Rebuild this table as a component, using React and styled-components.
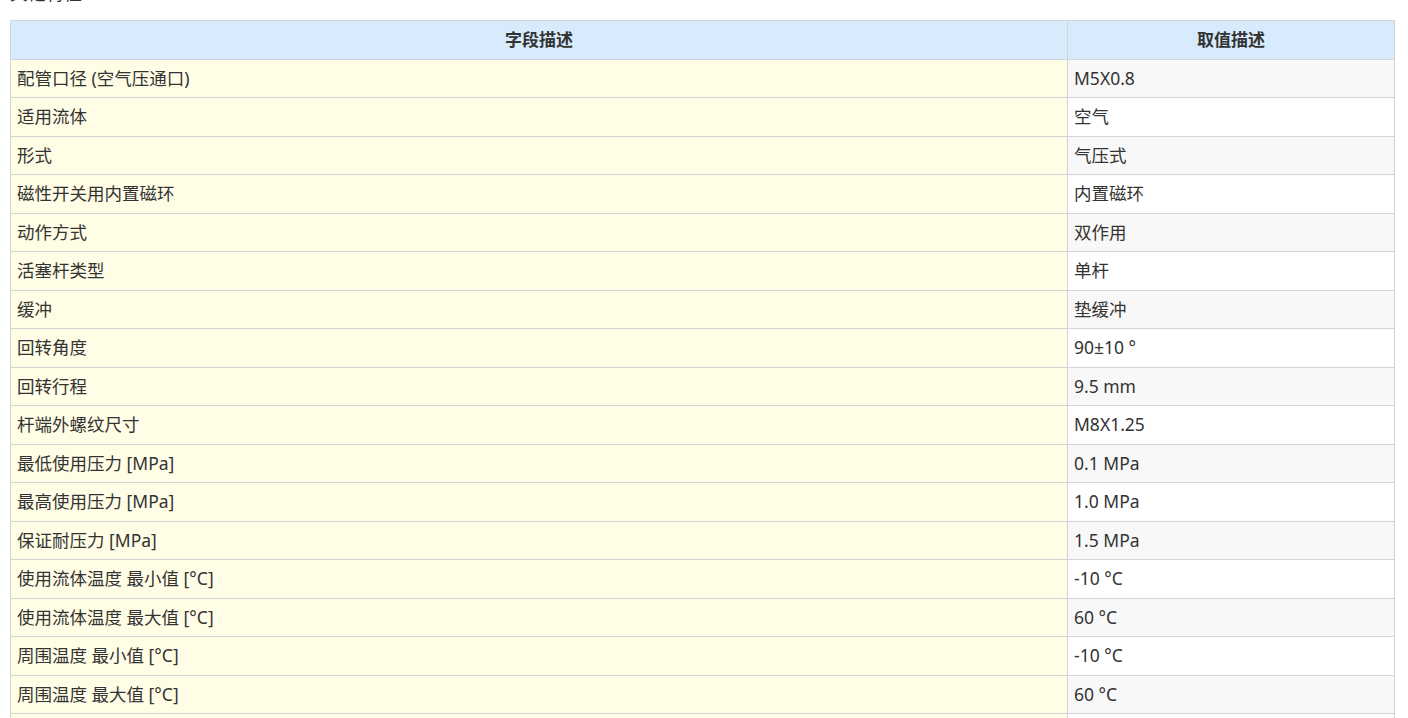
import styled, { createGlobalStyle } from "styled-components";

const GlobalStyle = createGlobalStyle`
  html, body {
    margin: 0;
    padding: 0;
    background: #fff;
  }
  body {
    font-family: "Noto Sans", "Noto Sans CJK SC", sans-serif;
    color: #333;
    overflow: hidden;
  }
`;

const specs = [
  ["配管口径 (空气压通口)", "M5X0.8"],
  ["适用流体", "空气"],
  ["形式", "气压式"],
  ["磁性开关用内置磁环", "内置磁环"],
  ["动作方式", "双作用"],
  ["活塞杆类型", "单杆"],
  ["缓冲", "垫缓冲"],
  ["回转角度", "90±10 °"],
  ["回转行程", "9.5 mm"],
  ["杆端外螺纹尺寸", "M8X1.25"],
  ["最低使用压力 [MPa]", "0.1 MPa"],
  ["最高使用压力 [MPa]", "1.0 MPa"],
  ["保证耐压力 [MPa]", "1.5 MPa"],
  ["使用流体温度 最小值 [°C]", "-10 °C"],
  ["使用流体温度 最大值 [°C]", "60 °C"],
  ["周围温度 最小值 [°C]", "-10 °C"],
  ["周围温度 最大值 [°C]", "60 °C"],
  ["重量 [g]", "—"],
];

const Section = styled.section`
  padding: 0 13px 0 10px;
`;

const Title = styled.h3`
  margin: -19px 0 15px;
  font-size: 18px;
  font-weight: normal;
  line-height: 24px;
  color: #333;
`;

const Table = styled.table`
  width: 100%;
  border-collapse: collapse;
  font-size: 17.5px;
  line-height: 23.5px;
`;

const Head = styled.th`
  background: #d7ebfc;
  border: 1px solid #cfd6dc;
  padding: 7px 6px;
  font-size: 17px;
  font-weight: bold;
  text-align: center;
  width: ${(p) => p.$width};
`;

const Row = styled.tr``;

const Cell = styled.td`
  border: 1px solid #d3d3d3;
  padding: 7px 6px;
  text-align: left;
  background: ${(p) => (p.$field ? "#fffde6" : p.$odd ? "#f8f8f8" : "#fff")};
`;

export default function App() {
  return (
    <>
      <GlobalStyle />
      <Section>
        <Title>其他特性</Title>
        <Table>
          <thead>
            <tr>
              <Head $width="auto">字段描述</Head>
              <Head $width="314px">取值描述</Head>
            </tr>
          </thead>
          <tbody>
            {specs.map(([field, value], i) => (
              <Row key={field}>
                <Cell $field>{field}</Cell>
                <Cell $odd={i % 2 === 0}>{value}</Cell>
              </Row>
            ))}
          </tbody>
        </Table>
      </Section>
    </>
  );
}
